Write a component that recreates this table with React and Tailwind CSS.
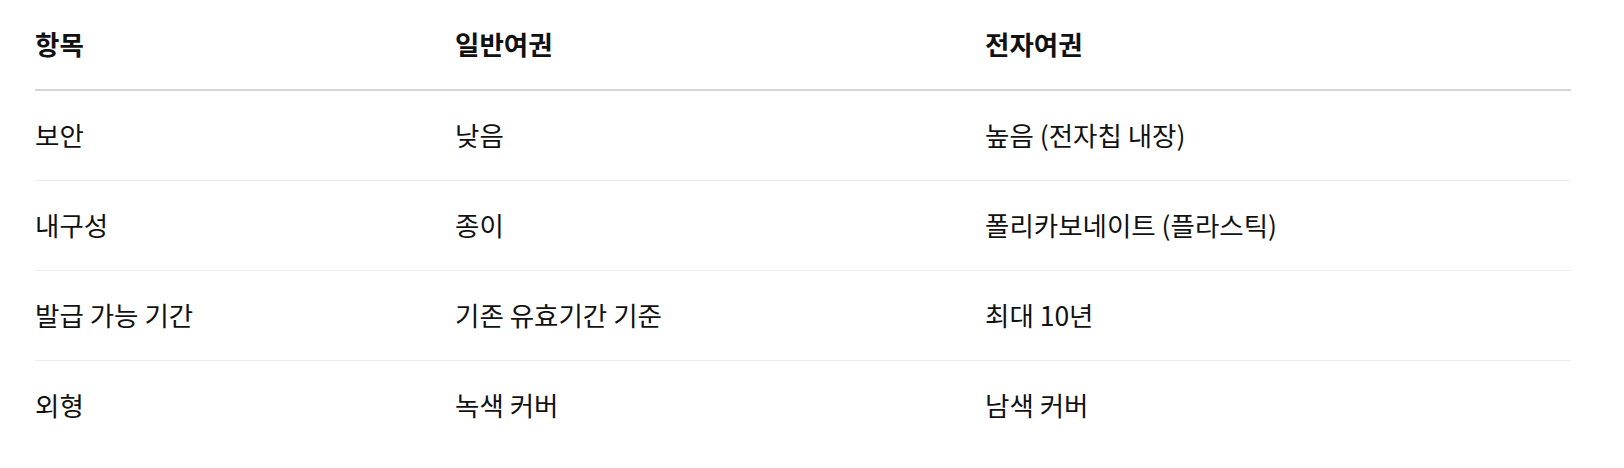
import React from 'react';

const rows = [
  { item: '보안', normal: '낮음', e: '높음 (전자칩 내장)' },
  { item: '내구성', normal: '종이', e: '폴리카보네이트 (플라스틱)' },
  { item: '발급 가능 기간', normal: '기존 유효기간 기준', e: '최대 10년' },
  { item: '외형', normal: '녹색 커버', e: '남색 커버' },
];

const App = () => {
  return (
    <div
      className="min-h-screen bg-white pl-[35px] text-[#111111]"
      style={{ fontFamily: '"Noto Sans CJK KR", "Noto Sans", sans-serif' }}
    >
      <table className="w-[1536px] border-collapse text-left text-[26.5px] leading-none">
        <thead>
          <tr className="h-[90px] border-b-2 border-[#d6d6d6]">
            <th className="w-[420px] p-0 font-semibold">항목</th>
            <th className="w-[530px] p-0 font-semibold">일반여권</th>
            <th className="p-0 font-semibold">전자여권</th>
          </tr>
        </thead>
        <tbody>
          {rows.map((r, i) => (
            <tr
              key={r.item}
              className={i < rows.length - 1 ? 'h-[90px] border-b border-[#ededed]' : 'h-[89px]'}
            >
              <td className="p-0 font-normal">{r.item}</td>
              <td className="p-0 font-normal">{r.normal}</td>
              <td className="p-0 font-normal">{r.e}</td>
            </tr>
          ))}
        </tbody>
      </table>
    </div>
  );
};

export default App;
